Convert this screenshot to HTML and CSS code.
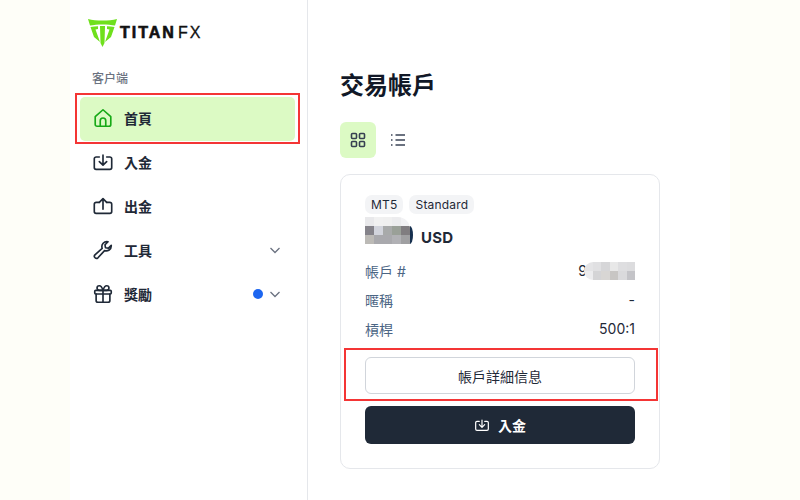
FILE: index.html
```html
<!DOCTYPE html>
<html lang="zh-Hant">
<head>
  <meta charset="UTF-8" />
  <meta name="viewport" content="width=device-width, initial-scale=1.0"/>
  <title>交易帳戶</title>
  <link rel="stylesheet" href="styles.css">
</head>
<body>
  <div class="app">
    <aside class="sidebar">
      <div class="logo">
        <svg class="logo-mark" width="29" height="28" viewBox="0 0 29 28">
          <path fill="#6fe01c" d="M0 0 C8 2 21 2 29 0 L27 6.500 C20 5 9 5 2 6.500 Z"/>
          <path fill="#6fe01c" d="M2.500 8 C5 7.500 7.500 7.300 10 7.200 L10 10 L7.500 10.500 L12 23 L6 18 Z"/>
          <path fill="#6fe01c" d="M26.500 8 C24 7.500 21.500 7.300 19 7.200 L19 10 L21.500 10.500 L17 23 L23 18 Z"/>
          <path fill="#6fe01c" d="M12 7 L17 7 L16.500 24 L14.500 28 L12.500 24 Z"/>
        </svg>
        <span class="logo-text">TITAN</span><span class="logo-fx">FX</span>
      </div>
      <p class="nav-label">客户端</p>
      <nav class="nav">
        <a class="nav-item active">
          <svg class="nav-icon" viewBox="0 0 24 24"><path d="M3.500 10.500 12 3l8.500 7.500V19a2 2 0 0 1-2 2h-13a2 2 0 0 1-2-2z"/><path d="M9 21v-6a3 3 0 0 1 6 0v6"/></svg>
          <span>首頁</span>
          <span class="red-box nav-box"></span>
        </a>
        <a class="nav-item">
          <svg class="nav-icon" viewBox="0 0 24 24"><path d="M8 6.500H4.500a2 2 0 0 0-2 2V18a2 2 0 0 0 2 2h15a2 2 0 0 0 2-2V8.500a2 2 0 0 0-2-2H16"/><path d="M12 4.500V15M8 11.500l4 4 4-4"/></svg>
          <span>入金</span>
        </a>
        <a class="nav-item">
          <svg class="nav-icon" viewBox="0 0 24 24"><path d="M8 8H4.500a2 2 0 0 0-2 2v8a2 2 0 0 0 2 2h15a2 2 0 0 0 2-2v-8a2 2 0 0 0-2-2H16"/><path d="M12 15.500V4.500M8 8l4-4 4 4"/></svg>
          <span>出金</span>
        </a>
        <a class="nav-item">
          <svg class="nav-icon" viewBox="0 0 24 24"><path d="M21 7.500a5.500 5.500 0 0 1-7.300 5.200L6.500 20.500a2.300 2.300 0 0 1-3.300-3.200l7.900-7.100A5.500 5.500 0 0 1 17.500 3l-3.300 3.300.5 3.200 3.200.5L21 7z"/></svg>
          <span>工具</span>
          <svg class="chevron" viewBox="0 0 12 12"><path d="M1.500 4 6 8.500 10.500 4"/></svg>
        </a>
        <a class="nav-item">
          <svg class="nav-icon" viewBox="0 0 24 24"><rect x="3" y="8" width="18" height="4" rx="1"/><path d="M4.500 12v7a2 2 0 0 0 2 2h11a2 2 0 0 0 2-2v-7M12 8v13M12 8S10.500 3 8 3a2.500 2.500 0 0 0 0 5zM12 8s1.500-5 4-5a2.500 2.500 0 0 1 0 5z"/></svg>
          <span>獎勵</span>
          <i class="dot"></i>
          <svg class="chevron" viewBox="0 0 12 12"><path d="M1.500 4 6 8.500 10.500 4"/></svg>
        </a>
      </nav>
    </aside>

    <main class="main">
      <h1 class="title">交易帳戶</h1>
      <div class="view-switch">
        <button class="view-btn on">
          <svg width="16" height="16" viewBox="0 0 16 16"><rect x="1.500" y="1.500" width="5" height="5" rx="1"/><rect x="9.500" y="1.500" width="5" height="5" rx="1"/><rect x="1.500" y="9.500" width="5" height="5" rx="1"/><rect x="9.500" y="9.500" width="5" height="5" rx="1"/></svg>
        </button>
        <button class="view-btn">
          <svg width="16" height="16" viewBox="0 0 16 16"><path d="M5.500 3H15M5.500 8H15M5.500 13H15M1 3h1.500M1 8h1.500M1 13h1.500"/></svg>
        </button>
      </div>

      <section class="card">
        <div class="tags"><span class="tag">MT5</span><span class="tag">Standard</span></div>
        <div class="balance">
          <div class="mosaic name-mosaic">
            <i style="background:#e9e9eb"></i><i style="background:#f1f1f1"></i><i style="background:#f0f0f0"></i><i style="background:#ececee"></i><i style="background:#f2f2f4"></i>
            <i style="background:#85838a"></i><i style="background:#d2d4dc"></i><i style="background:#a8aaaa"></i><i style="background:#9aa098"></i><i style="background:#807d80"></i>
            <i style="background:#bcbab6"></i><i style="background:#a9a9ad"></i><i style="background:#a9a9ad"></i><i style="background:#b1b1b5"></i><i style="background:#a0a0a2"></i>
          </div>
          <span class="flag-edge"></span>
          <span class="currency">USD</span>
        </div>
        <dl class="rows">
          <div class="row">
            <dt>帳戶 #</dt>
            <dd class="acct">9<span class="mosaic acct-mosaic">
              <i style="background:#e4e4e6"></i><i style="background:#e0e0e2"></i><i style="background:#d6d6d8"></i><i style="background:#e8e8e8"></i><i style="background:#dedee0"></i><i style="background:#dcdcde"></i>
              <i style="background:#ececee"></i><i style="background:#d4d4d6"></i><i style="background:#d8d6d4"></i><i style="background:#c8c6c4"></i><i style="background:#dadadc"></i><i style="background:#c4c4c8"></i>
            </span></dd>
          </div>
          <div class="row"><dt>暱稱</dt><dd>-</dd></div>
          <div class="row"><dt>槓桿</dt><dd>500:1</dd></div>
        </dl>
        <div class="actions">
          <div class="highlighted">
            <button class="btn btn-outline">帳戶詳細信息</button>
            <span class="red-box btn-box"></span>
          </div>
          <button class="btn btn-dark">
            <svg width="16" height="16" viewBox="0 0 24 24"><path d="M8 6.500H4.500a2 2 0 0 0-2 2V18a2 2 0 0 0 2 2h15a2 2 0 0 0 2-2V8.500a2 2 0 0 0-2-2H16"/><path d="M12 4.500V15M8 11.500l4 4 4-4"/></svg>
            入金
          </button>
        </div>
      </section>
    </main>
  </div>
</body>
</html>
```
FILE: styles.css
```css
body {
  margin: 0;
  background-color: #fefef8;
  color: #1f2937;
  font-family: Inter, "Noto Sans CJK TC", sans-serif;
  height: 100vh;
  overflow: hidden;
}

.app {
  display: flex;
  width: 660px;
  height: 500px;
  margin: 0 auto;
  background-color: #fff;
}

/* sidebar */
.sidebar {
  width: 237px;
  flex-shrink: 0;
  border-right: 1px solid #e5e7eb;
  padding-top: 19px;
}

.logo {
  display: flex;
  align-items: center;
  height: 28px;
  margin-left: 18px;
  color: #111;
}

.logo-mark {
  margin-right: 3px;
}

.logo-text {
  font-family: "Liberation Sans", sans-serif;
  font-weight: 700;
  font-size: 16px;
  letter-spacing: 2px;
  -webkit-text-stroke: 0.6px #111;
}

.logo-fx {
  font-family: "Liberation Sans", sans-serif;
  font-size: 16px;
  letter-spacing: 2px;
  margin-left: 2px;
  -webkit-text-stroke: 0.3px #111;
}

.nav-label {
  margin: 22px 0 0 22px;
  font-size: 12px;
  line-height: 20px;
  font-weight: 500;
  color: #6b7280;
}

.nav {
  display: flex;
  flex-direction: column;
  margin: 8px 12px 0 10px;
}

.nav-item {
  position: relative;
  display: flex;
  align-items: center;
  box-sizing: border-box;
  height: 44px;
  padding: 0 14px 3px 12px;
  font-size: 14px;
  font-weight: 700;
  border-radius: 5px;
}

.nav-item.active {
  background-color: #dcfac4;
}

.nav-icon {
  width: 22px;
  height: 22px;
  margin-right: 10px;
  fill: none;
  stroke: #1f2937;
  stroke-width: 1.800;
  stroke-linecap: round;
  stroke-linejoin: round;
}

.active .nav-icon {
  stroke: #16a916;
}

.chevron {
  width: 12px;
  height: 12px;
  margin-left: auto;
  fill: none;
  stroke: #6b7280;
  stroke-width: 1.300;
}

.dot {
  width: 10px;
  height: 10px;
  margin-left: auto;
  border-radius: 50%;
  background-color: #1d66f0;
}

.dot + .chevron {
  margin-left: 6px;
}

/* red marks drawn over the screenshot */
.red-box {
  position: absolute;
  border: 2px solid #f43535;
  pointer-events: none;
}

.nav-box {
  top: -4px;
  bottom: -3px;
  left: -5px;
  right: -5px;
}

.btn-box {
  top: -9px;
  bottom: -7px;
  left: -21px;
  right: -23px;
}

/* main */
.main {
  flex: 1;
  padding: 70px 70px 0 32px;
}

.title {
  margin: 0;
  font-size: 24px;
  line-height: 32px;
  font-weight: 700;
  color: #111827;
}

.view-switch {
  display: flex;
  gap: 4px;
  margin-top: 20px;
}

.view-btn {
  display: flex;
  align-items: center;
  justify-content: center;
  width: 36px;
  height: 36px;
  padding: 0;
  border: none;
  border-radius: 6px;
  background: none;
}

.view-btn.on {
  background-color: #dcfac4;
}

.view-btn svg {
  fill: none;
  stroke: #6b7280;
  stroke-width: 1.800;
}

.view-btn.on svg {
  stroke: #374151;
  stroke-width: 1.600;
}

.card {
  width: 270px;
  height: 253px;
  margin-top: 16px;
  padding: 20px 24px;
  border: 1px solid #e5e7eb;
  border-radius: 10px;
}

.tags {
  display: flex;
  gap: 6px;
}

.tag {
  padding: 0 6px;
  font-size: 12px;
  letter-spacing: 0.2px;
  line-height: 19px;
  background-color: #f3f4f6;
  border-radius: 7px;
}

.balance {
  display: flex;
  align-items: flex-start;
  height: 28px;
  margin-top: 3px;
}

.mosaic {
  display: grid;
}

.mosaic i {
  display: block;
}

.name-mosaic {
  grid-template-columns: repeat(5, 9px);
  grid-template-rows: repeat(3, 9px);
  border-top-right-radius: 12px;
  overflow: hidden;
}

.flag-edge {
  width: 3px;
  height: 18px;
  margin: 9px 8px 0 0;
  background-color: #16304f;
  border-radius: 0 100% 100% 0 / 0 50% 50% 0;
}

.currency {
  margin-top: 11px;
  font-size: 15px;
  line-height: 20px;
  letter-spacing: 0.2px;
  font-weight: 700;
}

.rows {
  margin: 11px 0 0;
}

.row {
  display: flex;
  justify-content: space-between;
  align-items: center;
  height: 29px;
  font-size: 14px;
}

.row dt {
  color: #4b6584;
}

.row dd {
  margin: 0;
}

.acct {
  display: flex;
  align-items: center;
}

.acct-mosaic {
  grid-template-columns: repeat(6, 8.500px);
  grid-template-rows: repeat(2, 9px);
  margin-left: -3px;
  border-radius: 9px 0 0 9px;
  overflow: hidden;
}

.actions {
  display: flex;
  flex-direction: column;
  gap: 12px;
  margin-top: 14px;
}

.highlighted {
  position: relative;
}

.btn {
  display: flex;
  align-items: center;
  justify-content: center;
  width: 100%;
  font-family: inherit;
  font-size: 14px;
  border-radius: 6px;
}

.btn-outline {
  height: 37px;
  background-color: #fff;
  border: 1px solid #d1d5db;
  color: #1f2937;
}

.btn-dark {
  height: 38px;
  gap: 8px;
  font-weight: 700;
  background-color: #1f2937;
  border: none;
  color: #fff;
}

.btn-dark svg {
  fill: none;
  stroke: #fff;
  stroke-width: 1.800;
  stroke-linecap: round;
  stroke-linejoin: round;
}
```
